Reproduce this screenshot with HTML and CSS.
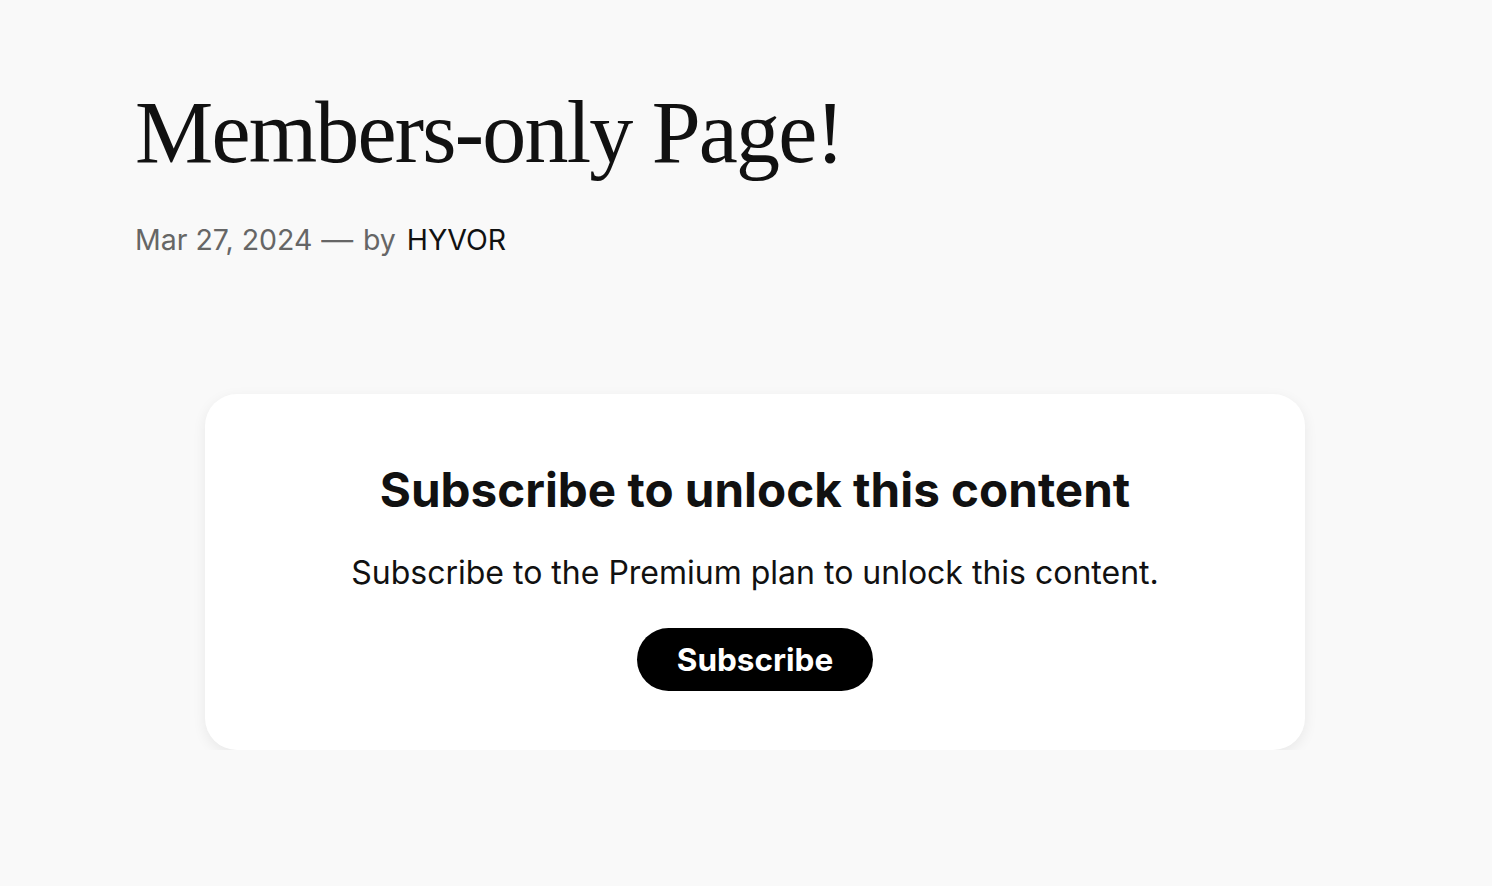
FILE: index.html
```html
<!DOCTYPE html>
<html lang="en">
<head>
<meta charset="utf-8">
<title>Members-only Page!</title>
<link rel="stylesheet" href="styles.css">
</head>
<body>
<main class="page">
  <header class="post-header">
    <h1 class="post-title">Members-only Page!</h1>
    <div class="post-meta">
      <span class="date">Mar 27, 2024</span>
      <span class="dash">—</span>
      <span class="by">by</span>
      <span class="author">HYVOR</span>
    </div>
  </header>
  <section class="paywall">
    <h2 class="paywall-title">Subscribe to unlock this content</h2>
    <p class="paywall-text">Subscribe to the Premium plan to unlock this content.</p>
    <a class="btn" href="#">Subscribe</a>
  </section>
</main>
</body>
</html>
```
FILE: styles.css
```css
html, body {
  margin: 0;
  padding: 0;
  background: #f9f9f9;
}
body {
  font-family: Inter, "Noto Sans", sans-serif;
  color: #111;
}
.page {
  padding: 78px 0 0 135px;
  width: 1240px;
}
.post-title {
  margin: 0;
  font-family: "Liberation Serif", "DejaVu Serif", serif;
  font-weight: 400;
  font-size: 88px;
  line-height: 110px;
  color: #111;
  letter-spacing: -1.8px;
}
.post-meta {
  margin-top: 34px;
  display: flex;
  gap: 11px;
  font-size: 28.5px;
  line-height: 36px;
  color: #666;
}
.post-meta .dash {
  transform: scaleX(1.12);
}
.post-meta .author {
  color: #111;
}
.paywall {
  margin: 136px 0 0 70px;
  width: 1100px;
  box-sizing: border-box;
  background: #fff;
  border-radius: 32px;
  box-shadow: 0 4px 14px rgba(0, 0, 0, 0.07);
  padding: 66px 40px 59px;
  text-align: center;
}
.paywall-title {
  margin: 0;
  font-size: 47.6px;
  font-weight: 700;
  line-height: 60px;
  color: #111;
}
.paywall-text {
  margin: 33px 0 35px;
  font-size: 32px;
  line-height: 40px;
  color: #111;
}
.btn {
  display: inline-block;
  vertical-align: top;
  background: #000;
  color: #fff;
  text-decoration: none;
  font-weight: 700;
  font-size: 31.5px;
  line-height: 63px;
  padding: 0 40px;
  border-radius: 32px;
}
```
